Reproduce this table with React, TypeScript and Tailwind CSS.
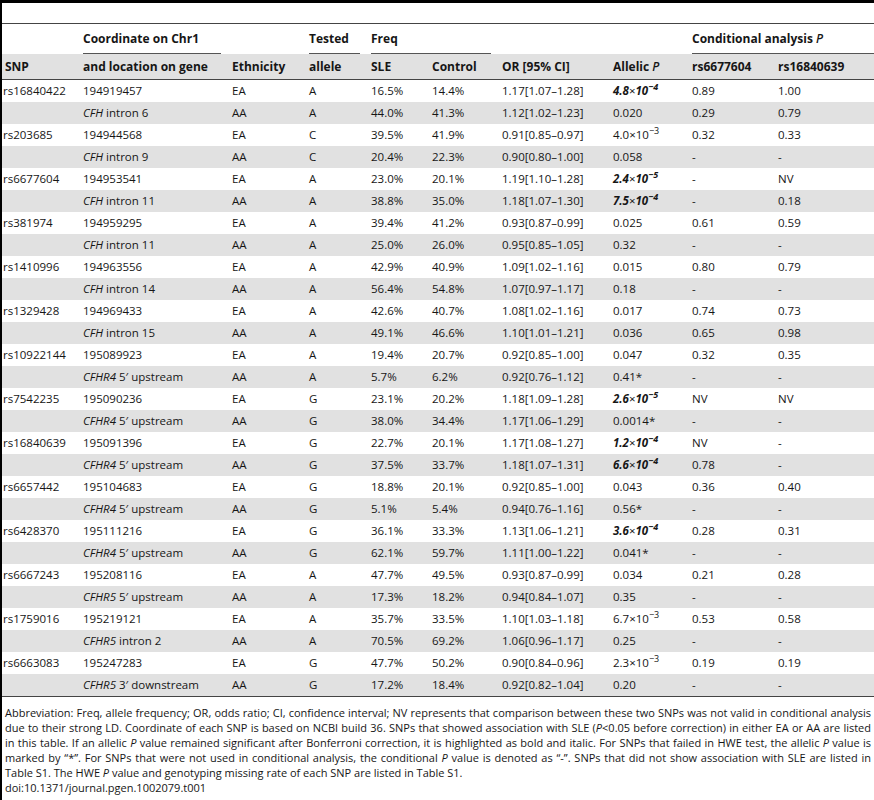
import React from "react";

type Cell = React.ReactNode;

const cols =
  "grid grid-cols-[81px_149px_77px_62px_61px_70px_111px_79px_86px_1fr]";

const Sci = ({ m, e, b }: { m: string; e: string; b?: boolean }) =>
  b ? (
    <span className="font-bold italic">
      {m}
      <span className="not-italic font-normal">×</span>10
      <sup className="text-[9px] top-[-0.6em]">−{e}</sup>
    </span>
  ) : (
    <span>
      {m}×10<sup className="text-[9px] top-[-0.6em]">−{e}</sup>
    </span>
  );

const G = ({ g, rest }: { g: string; rest: string }) => (
  <span>
    <i>{g}</i> {rest}
  </span>
);

const rows: Cell[][] = [
  ["rs16840422", "194919457", "EA", "A", "16.5%", "14.4%", "1.17[1.07–1.28]", <Sci m="4.8" e="4" b />, "0.89", "1.00"],
  ["", <G g="CFH" rest="intron 6" />, "AA", "A", "44.0%", "41.3%", "1.12[1.02–1.23]", "0.020", "0.29", "0.79"],
  ["rs203685", "194944568", "EA", "C", "39.5%", "41.9%", "0.91[0.85–0.97]", <Sci m="4.0" e="3" />, "0.32", "0.33"],
  ["", <G g="CFH" rest="intron 9" />, "AA", "C", "20.4%", "22.3%", "0.90[0.80–1.00]", "0.058", "-", "-"],
  ["rs6677604", "194953541", "EA", "A", "23.0%", "20.1%", "1.19[1.10–1.28]", <Sci m="2.4" e="5" b />, "-", "NV"],
  ["", <G g="CFH" rest="intron 11" />, "AA", "A", "38.8%", "35.0%", "1.18[1.07–1.30]", <Sci m="7.5" e="4" b />, "-", "0.18"],
  ["rs381974", "194959295", "EA", "A", "39.4%", "41.2%", "0.93[0.87–0.99]", "0.025", "0.61", "0.59"],
  ["", <G g="CFH" rest="intron 11" />, "AA", "A", "25.0%", "26.0%", "0.95[0.85–1.05]", "0.32", "-", "-"],
  ["rs1410996", "194963556", "EA", "A", "42.9%", "40.9%", "1.09[1.02–1.16]", "0.015", "0.80", "0.79"],
  ["", <G g="CFH" rest="intron 14" />, "AA", "A", "56.4%", "54.8%", "1.07[0.97–1.17]", "0.18", "-", "-"],
  ["rs1329428", "194969433", "EA", "A", "42.6%", "40.7%", "1.08[1.02–1.16]", "0.017", "0.74", "0.73"],
  ["", <G g="CFH" rest="intron 15" />, "AA", "A", "49.1%", "46.6%", "1.10[1.01–1.21]", "0.036", "0.65", "0.98"],
  ["rs10922144", "195089923", "EA", "A", "19.4%", "20.7%", "0.92[0.85–1.00]", "0.047", "0.32", "0.35"],
  ["", <G g="CFHR4" rest="5′ upstream" />, "AA", "A", "5.7%", "6.2%", "0.92[0.76–1.12]", "0.41*", "-", "-"],
  ["rs7542235", "195090236", "EA", "G", "23.1%", "20.2%", "1.18[1.09–1.28]", <Sci m="2.6" e="5" b />, "NV", "NV"],
  ["", <G g="CFHR4" rest="5′ upstream" />, "AA", "G", "38.0%", "34.4%", "1.17[1.06–1.29]", "0.0014*", "-", "-"],
  ["rs16840639", "195091396", "EA", "G", "22.7%", "20.1%", "1.17[1.08–1.27]", <Sci m="1.2" e="4" b />, "NV", "-"],
  ["", <G g="CFHR4" rest="5′ upstream" />, "AA", "G", "37.5%", "33.7%", "1.18[1.07–1.31]", <Sci m="6.6" e="4" b />, "0.78", "-"],
  ["rs6657442", "195104683", "EA", "G", "18.8%", "20.1%", "0.92[0.85–1.00]", "0.043", "0.36", "0.40"],
  ["", <G g="CFHR4" rest="5′ upstream" />, "AA", "G", "5.1%", "5.4%", "0.94[0.76–1.16]", "0.56*", "-", "-"],
  ["rs6428370", "195111216", "EA", "G", "36.1%", "33.3%", "1.13[1.06–1.21]", <Sci m="3.6" e="4" b />, "0.28", "0.31"],
  ["", <G g="CFHR4" rest="5′ upstream" />, "AA", "G", "62.1%", "59.7%", "1.11[1.00–1.22]", "0.041*", "-", "-"],
  ["rs6667243", "195208116", "EA", "A", "47.7%", "49.5%", "0.93[0.87–0.99]", "0.034", "0.21", "0.28"],
  ["", <G g="CFHR5" rest="5′ upstream" />, "AA", "A", "17.3%", "18.2%", "0.94[0.84–1.07]", "0.35", "-", "-"],
  ["rs1759016", "195219121", "EA", "A", "35.7%", "33.5%", "1.10[1.03–1.18]", <Sci m="6.7" e="3" />, "0.53", "0.58"],
  ["", <G g="CFHR5" rest="intron 2" />, "AA", "A", "70.5%", "69.2%", "1.06[0.96–1.17]", "0.25", "-", "-"],
  ["rs6663083", "195247283", "EA", "G", "47.7%", "50.2%", "0.90[0.84–0.96]", <Sci m="2.3" e="3" />, "0.19", "0.19"],
  ["", <G g="CFHR5" rest="3′ downstream" />, "AA", "G", "17.2%", "18.4%", "0.92[0.82–1.04]", "0.20", "-", "-"],
];

const Line = ({ children, last }: { children: React.ReactNode; last?: boolean }) => (
  <div className={`whitespace-nowrap ${last ? "text-left" : "text-justify [text-align-last:justify]"}`}>
    {children}
  </div>
);

export default function App() {
  return (
    <div
      className="w-[874px] h-[800px] bg-white text-[#161616] border-l-2 border-t-[3px] border-black overflow-hidden"
      style={{ fontFamily: '"Open Sans", "DejaVu Sans", sans-serif' }}
    >
      <div className="pt-[20px]">
        <div className="border-t border-[#444]">
          {/* header row 1 */}
          <div className={`${cols} h-[30px] text-[12px] font-bold`}>
            <div />
            <div className="flex items-center mr-[11px] border-b border-[#555]">Coordinate on Chr1</div>
            <div />
            <div className="flex items-center mr-[11px] border-b border-[#555]">Tested</div>
            <div className="col-span-2 flex items-center mr-[11px] border-b border-[#555]">Freq</div>
            <div />
            <div />
            <div className="col-span-2 flex items-center border-b border-[#555]">
              Conditional analysis&nbsp;<span className="italic font-semibold">P</span>
            </div>
          </div>
          {/* header row 2 */}
          <div className={`${cols} h-[26px] items-center text-[12px] font-bold bg-[#e1e1e1] border-b border-[#444]`}>
            <div className="pl-[3px]">SNP</div>
            <div>and location on gene</div>
            <div>Ethnicity</div>
            <div>allele</div>
            <div>SLE</div>
            <div>Control</div>
            <div>OR [95% CI]</div>
            <div>
              Allelic <span className="italic font-semibold">P</span>
            </div>
            <div>rs6677604</div>
            <div>rs16840639</div>
          </div>
          {/* data rows */}
          {rows.map((r, i) => (
            <div
              key={i}
              className={`${cols} h-[22px] items-center text-[11.5px] whitespace-nowrap ${
                i % 2 === 1 ? "bg-[#e1e1e1]" : "bg-white"
              }`}
            >
              {r.map((c, j) => (
                <div key={j} className={j === 0 ? "pl-[1px]" : ""}>
                  {c}
                </div>
              ))}
            </div>
          ))}
          <div className="border-t border-[#444]" />
        </div>
        <div className="pl-[3px] pr-[3px] pt-[8px] text-[11px] leading-[15px]">
          <Line>
            Abbreviation: Freq, allele frequency; OR, odds ratio; CI, confidence interval; NV represents that comparison
            between these two SNPs was not valid in conditional analysis
          </Line>
          <Line>
            due to their strong LD. Coordinate of each SNP is based on NCBI build 36. SNPs that showed association with SLE
            (<i>P</i>&lt;0.05 before correction) in either EA or AA are listed
          </Line>
          <Line>
            in this table. If an allelic <i>P</i> value remained significant after Bonferroni correction, it is highlighted as
            bold and italic. For SNPs that failed in HWE test, the allelic <i>P</i> value is
          </Line>
          <Line>
            marked by “*”. For SNPs that were not used in conditional analysis, the conditional <i>P</i> value is denoted as
            “-”. SNPs that did not show association with SLE are listed in
          </Line>
          <Line last>
            Table S1. The HWE <i>P</i> value and genotyping missing rate of each SNP are listed in Table S1.
          </Line>
          <Line last>doi:10.1371/journal.pgen.1002079.t001</Line>
        </div>
      </div>
    </div>
  );
}
